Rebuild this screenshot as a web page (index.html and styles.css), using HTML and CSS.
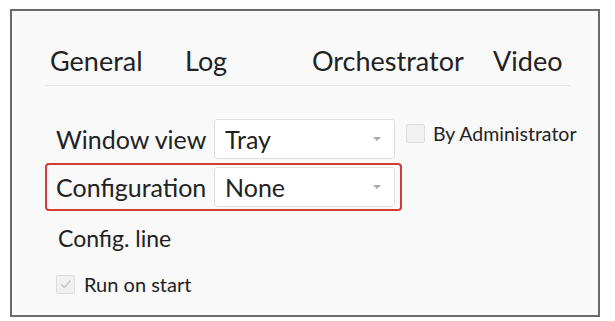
FILE: index.html
```html
<!DOCTYPE html>
<html lang="en">
<head>
    <meta charset="UTF-8">
    <meta name="viewport" content="width=device-width, initial-scale=1.0">
    <title>Settings</title>
    <link rel="stylesheet" href="styles.css">
</head>
<body>
    <div class="window">
        <!-- Tabs -->
        <div class="tabs">
            <span class="tab tab-general">General</span>
            <span class="tab tab-log">Log</span>
            <span class="tab tab-orch">Orchestrator</span>
            <span class="tab tab-video">Video</span>
        </div>

        <!-- Form -->
        <div class="form">
            <div class="row">
                <div class="field">
                    <label class="label">Window view</label>
                    <div class="select">Tray<span class="arrow"></span></div>
                </div>
                <label class="check">
                    <span class="box"></span>
                    By Administrator
                </label>
            </div>
            <div class="field highlight">
                <label class="label">Configuration</label>
                <div class="select">None<span class="arrow"></span></div>
            </div>
            <div class="plain">Config. line</div>
            <label class="check run">
                <span class="box checked">
                    <svg width="12" height="10" viewBox="0 0 12 10"><path d="M1.5 5.5 L4.5 8.5 L10.5 1.5" fill="none" stroke="#c4c4c4" stroke-width="1.4"/></svg>
                </span>
                Run on start
            </label>
        </div>
    </div>
</body>
</html>
```

FILE: styles.css
```css
body {
    margin: 0;
    background: #fff;
    font-family: Lato, "Noto Sans", sans-serif;
    color: #222;
}
.window {
    margin: 9px 0 0 10px;
    width: 586px;
    height: 304px;
    border: 2px solid #6a6a6a;
    background: #f9f9f9;
}
.tabs {
    display: flex;
    margin: 34px 28px 0 33px;
    padding: 0 0 8px 5px;
    border-bottom: 1px solid #e6e6e6;
    font-size: 27px;
    line-height: 32px;
}
.tab-general { width: 135px; }
.tab-log { width: 127px; }
.tab-orch { width: 181px; }
.form {
    margin: 29px 0 0 33px;
}
.row {
    display: flex;
    align-items: flex-start;
}
.field {
    display: flex;
    align-items: center;
    width: 341px;
    padding: 2px 3px 2px 9px;
    border: 2px solid transparent;
    border-radius: 4px;
}
.field.highlight {
    border-color: #d13b3b;
}
.label {
    width: 158px;
    font-size: 25px;
}
.select {
    position: relative;
    box-sizing: border-box;
    width: 181px;
    height: 40px;
    padding: 0 10px;
    background: #fff;
    border: 1px solid #e0e0e0;
    border-radius: 3px;
    font-size: 25px;
    line-height: 38px;
}
.arrow {
    position: absolute;
    right: 13px;
    top: 17px;
    border-left: 4px solid transparent;
    border-right: 4px solid transparent;
    border-top: 4px solid #a8a8a8;
}
.check {
    display: flex;
    align-items: center;
    gap: 8px;
    margin: 7px 0 0 4px;
    font-size: 19.5px;
}
.box {
    display: flex;
    align-items: center;
    justify-content: center;
    box-sizing: border-box;
    width: 19px;
    height: 19px;
    border: 1px solid #ddd;
    border-radius: 2px;
    background: #f1f1f1;
}
.plain {
    margin: 13px 0 0 13px;
    font-size: 23px;
}
.check.run {
    margin: 20px 0 0 11px;
    gap: 9px;
    font-size: 20px;
}
```
